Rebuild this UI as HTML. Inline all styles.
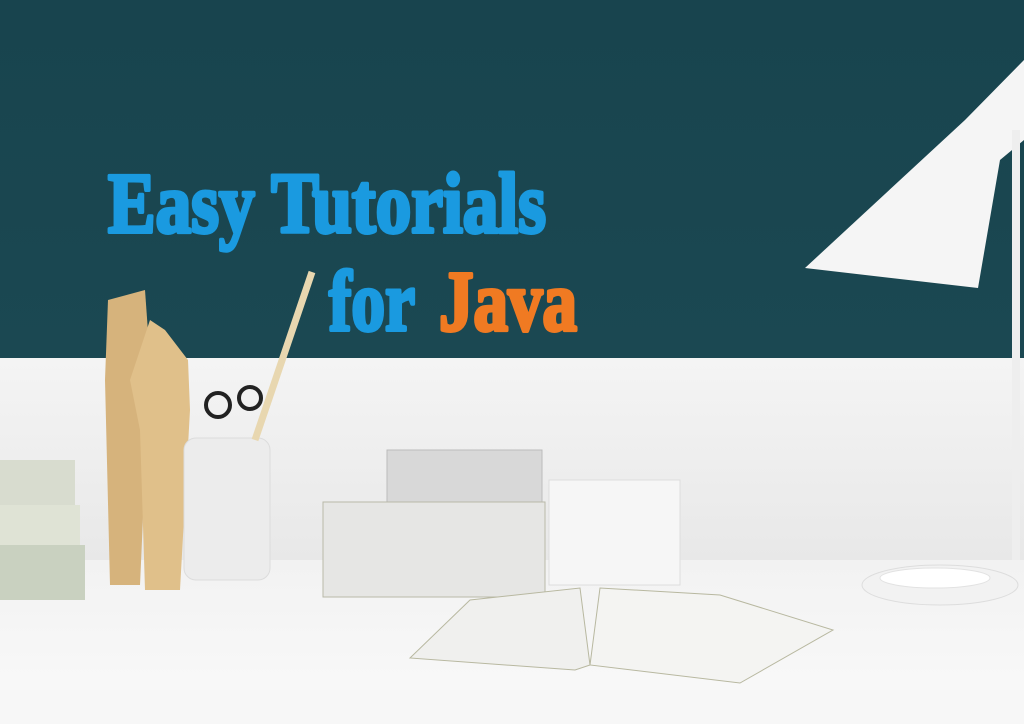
<!DOCTYPE html>
<html><head><meta charset="utf-8"><style>
html,body{margin:0;padding:0;width:1024px;height:724px;overflow:hidden;background:#fff}
</style></head><body>
<svg width="1024" height="724" viewBox="0 0 1024 724" xmlns="http://www.w3.org/2000/svg">
<defs>
<linearGradient id="wall" x1="0" y1="0" x2="0" y2="1"><stop offset="0" stop-color="#18444e"/><stop offset="1" stop-color="#1b4852"/></linearGradient>
<linearGradient id="white" x1="0" y1="0" x2="0" y2="1"><stop offset="0" stop-color="#f4f4f4"/><stop offset="1" stop-color="#e8e8e8"/></linearGradient>
<linearGradient id="desk" x1="0" y1="0" x2="0" y2="1"><stop offset="0" stop-color="#f2f2f2"/><stop offset="1" stop-color="#fafafa"/></linearGradient>
</defs>
<rect width="1024" height="360" fill="url(#wall)"/>
<rect y="358" width="1024" height="204" fill="url(#white)"/>
<rect y="560" width="1024" height="164" fill="url(#desk)"/>
<rect y="690" width="1024" height="34" fill="#f7f7f7"/>
<g font-family="'Liberation Serif',serif" font-weight="bold" font-size="86" stroke-width="4" stroke-linejoin="round">
<text x="108" y="232" textLength="438" lengthAdjust="spacingAndGlyphs" fill="#1a9ae0" stroke="#1a9ae0">Easy Tutorials</text>
<text x="329" y="330" textLength="86" lengthAdjust="spacingAndGlyphs" fill="#1a9ae0" stroke="#1a9ae0">for</text>
<text x="439" y="330" textLength="138" lengthAdjust="spacingAndGlyphs" fill="#f07a22" stroke="#f07a22">Java</text>
</g>
<!-- lamp -->
<path d="M1024 60 L965 120 L805 268 L978 288 L1000 160 L1024 140Z" fill="#f5f5f5"/>
<rect x="1012" y="130" width="8" height="430" fill="#eee"/>
<ellipse cx="940" cy="585" rx="78" ry="20" fill="#f2f2f2" stroke="#ddd"/>
<ellipse cx="935" cy="578" rx="55" ry="10" fill="#fff" stroke="#e2e2e2"/>
<!-- hands -->
<path d="M108 300 L145 290 L150 360 L140 585 L110 585 L105 380Z" fill="#d6b37c"/>
<path d="M130 380 L150 320 L165 330 L188 360 L190 410 L180 590 L145 590 L140 430Z" fill="#e0c08a"/>
<!-- pencil cup -->
<rect x="184" y="438" width="86" height="142" rx="12" fill="#ececec" stroke="#dcdcdc"/>
<line x1="255" y1="440" x2="312" y2="272" stroke="#e8d7b0" stroke-width="7"/>
<circle cx="218" cy="405" r="12" fill="none" stroke="#222" stroke-width="4"/>
<circle cx="250" cy="398" r="11" fill="none" stroke="#222" stroke-width="4"/>
<!-- books left -->
<rect x="0" y="460" width="75" height="45" fill="#d8dccf"/>
<rect x="0" y="505" width="80" height="40" fill="#dfe3d5"/>
<rect x="0" y="545" width="85" height="55" fill="#c9d1c0"/>
<!-- boxes -->
<rect x="387" y="450" width="155" height="75" fill="#d8d8d8" stroke="#bbb"/>
<rect x="323" y="502" width="222" height="95" fill="#e6e6e4" stroke="#b9b9a8"/>
<rect x="549" y="480" width="131" height="105" fill="#f6f6f6" stroke="#ddd"/>
<!-- open book -->
<path d="M410 658 L470 600 L580 588 L590 665 L575 670Z" fill="#f0f0ee" stroke="#b8b8a0"/>
<path d="M590 665 L600 588 L720 595 L833 630 L740 683Z" fill="#f4f4f2" stroke="#b8b8a0"/>
</svg>
</body></html>
